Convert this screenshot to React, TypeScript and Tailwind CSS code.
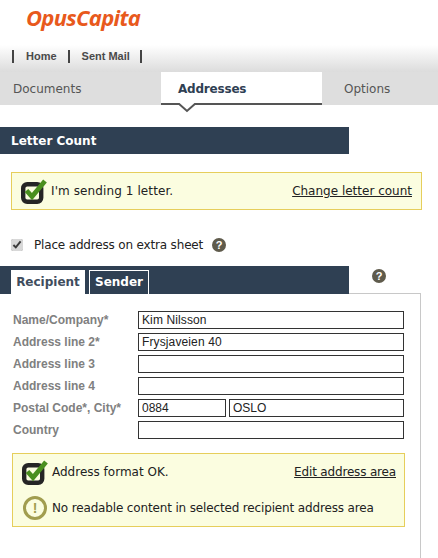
import React from "react";

function CheckIcon() {
  return (
    <svg width="26" height="26" viewBox="0 0 26 26" className="shrink-0">
      <rect x="2.2" y="6.2" width="18" height="17.6" rx="4" fill="none" stroke="#252525" strokeWidth="4.4" />
      <path d="M5.5 12.5 L11 18.5 L24 3" fill="none" stroke="#4a8f1e" strokeWidth="4.8" />
    </svg>
  );
}

function HelpIcon() {
  return (
    <span className="flex h-[14px] w-[14px] items-center justify-center rounded-full bg-[#5f5b4c] font-['Liberation_Sans',sans-serif] text-[11px] leading-none font-bold text-white">
      ?
    </span>
  );
}

function WarnIcon() {
  return (
    <span className="ml-[1px] flex h-6 w-6 shrink-0 items-center justify-center rounded-full border-[3px] border-[#a19d4f] font-['Liberation_Sans',sans-serif] text-[14px] leading-none font-bold text-[#a19d4f]">
      !
    </span>
  );
}

function Field({ label, value }: { label: string; value?: string }) {
  return (
    <div className="flex h-[18px] items-center">
      <label className="w-[125px] text-xs font-bold text-[#808080]">{label}</label>
      <div className="h-[18px] w-[266px] border border-[#333] bg-white px-[3px] text-xs leading-[16px] tracking-[0.12px] text-[#222]">
        {value}
      </div>
    </div>
  );
}

export default function App() {
  return (
    <div className="h-[558px] w-[438px] overflow-hidden bg-white font-['DejaVu_Sans',sans-serif] text-[#222]">
      {/* Header */}
      <div className="h-[45px] pt-[2px] pl-[26px]">
        <div className="font-['Open_Sans',sans-serif] text-[22px] leading-[30px] font-bold tracking-[-0.7px] text-[#e8591c] italic">
          OpusCapita
        </div>
      </div>
      <div className="flex h-[27px] items-start bg-gradient-to-b from-white to-[#dcdcdc] pt-[5px] pl-[12px] font-['Liberation_Sans',sans-serif] text-[11px] font-bold text-[#4a4a4a]">
        <span className="h-[13px] border-l-[2px] border-[#444]" />
        <span className="ml-[12px] leading-[13px]">Home</span>
        <span className="ml-[11px] h-[13px] border-l-[2px] border-[#444]" />
        <span className="ml-[12px] leading-[13px]">Sent Mail</span>
        <span className="ml-[10px] h-[13px] border-l-[2px] border-[#444]" />
      </div>

      {/* Main tabs */}
      <div className="flex h-[33px] bg-[#dedede] text-xs text-[#555]">
        <div className="w-[161px] pt-[9px] pl-[13px]">Documents</div>
        <div className="relative h-[33px] w-[161px] border-b-[2px] border-[#555] bg-white pt-[9px] pl-[17px] font-bold tracking-[-0.2px] text-[#2f4053]">
          Addresses
          <svg width="20" height="10" viewBox="0 0 20 10" className="absolute top-[31px] left-[16px]">
            <path d="M1 0 L10 8 L19 0" fill="#fff" stroke="#555" strokeWidth="2" />
          </svg>
        </div>
        <div className="pt-[9px] pl-[22px]">Options</div>
      </div>

      {/* Letter count */}
      <div className="mt-[22px] h-[27px] w-[349px] bg-[#2f4053] pl-[11px] text-xs leading-[28px] font-bold text-white">
        Letter Count
      </div>
      <div className="mt-[18px] ml-[11px] flex h-[38px] w-[411px] items-center border border-[#e6ce5b] bg-[#fbfde0] pr-[9px] pl-[9px] text-xs">
        <CheckIcon />
        <span className="ml-[4px] tracking-[0.1px]">I'm sending 1 letter.</span>
        <a className="ml-auto underline">Change letter count</a>
      </div>

      <div className="mt-[26px] flex h-[18px] items-center pl-[11px] text-xs">
        <input type="checkbox" defaultChecked readOnly className="m-0 h-[12px] w-[12px] accent-[#d8d8d8]" />
        <span className="ml-[11px] tracking-[-0.17px]">Place address on extra sheet</span>
        <span className="ml-[9px]">
          <HelpIcon />
        </span>
      </div>

      {/* Address tabs */}
      <div className="relative z-10 mt-[12px] flex h-[28px] w-[349px] items-end bg-[#2f4053] pl-[11px] text-xs font-bold">
        <div className="h-[24px] w-[74px] bg-white text-center leading-[24px] text-[#3f4d5e]">Recipient</div>
        <div className="ml-[4px] h-[24px] w-[60px] border border-b-0 border-white text-center leading-[22px] text-white">Sender</div>
        <span className="absolute top-[3px] left-[372px]">
          <HelpIcon />
        </span>
      </div>

      {/* Recipient panel */}
      <div className="-mt-px h-[300px] w-[421px] border-t border-r border-[#c8c8c8] pt-[17px]">
        <div className="flex flex-col gap-[4px] pl-[13px] font-['Liberation_Sans',sans-serif]">
          <Field label="Name/Company*" value="Kim Nilsson" />
          <Field label="Address line 2*" value="Frysjaveien 40" />
          <Field label="Address line 3" />
          <Field label="Address line 4" />
          <div className="flex h-[18px] items-center">
            <label className="w-[125px] text-xs font-bold text-[#808080]">Postal Code*, City*</label>
            <div className="h-[18px] w-[88px] border border-[#333] px-[3px] text-xs leading-[16px] text-[#222]">0884</div>
            <div className="ml-[3px] h-[18px] w-[175px] border border-[#333] px-[3px] text-xs leading-[16px] text-[#222]">OSLO</div>
          </div>
          <Field label="Country" />
        </div>

        <div className="mt-[14px] ml-[12px] h-[74px] w-[393px] border border-[#e6ce5b] bg-[#fbfde0] pr-[8px] pl-[9px] text-xs">
          <div className="flex h-[36px] items-center">
            <CheckIcon />
            <span className="ml-[4px]">Address format OK.</span>
            <a className="ml-auto tracking-[-0.17px] underline">Edit address area</a>
          </div>
          <div className="mt-[5px] flex h-[26px] items-center">
            <WarnIcon />
            <span className="ml-[5px] tracking-[-0.15px]">No readable content in selected recipient address area</span>
          </div>
        </div>
      </div>
    </div>
  );
}
